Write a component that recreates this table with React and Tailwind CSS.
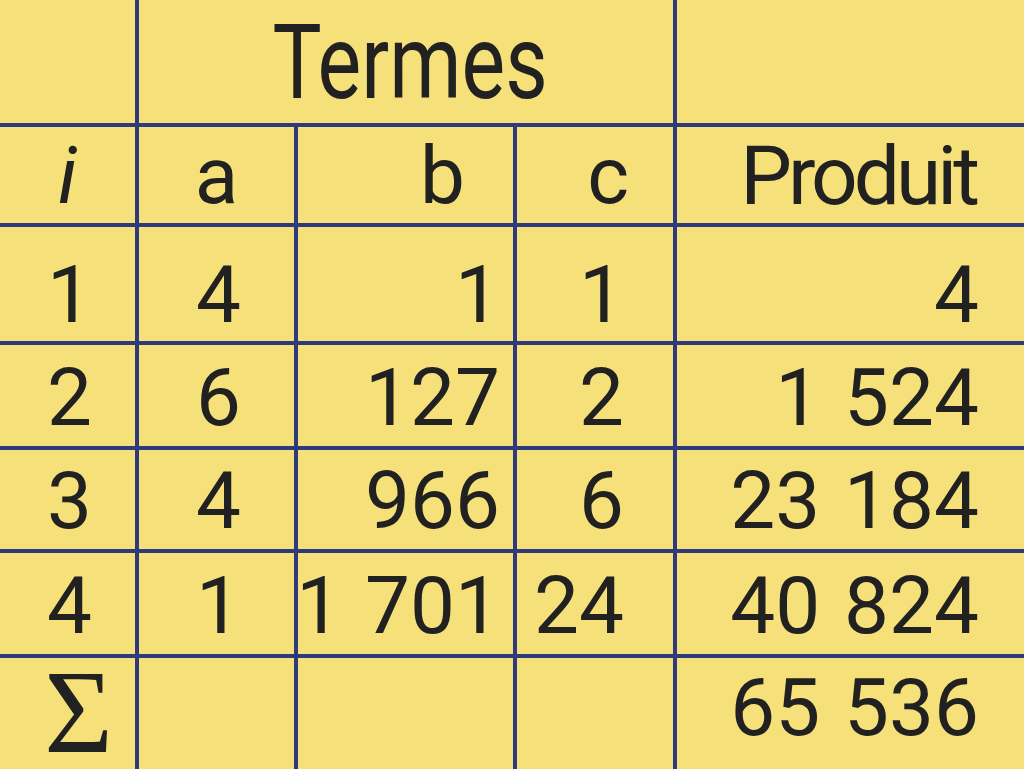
const rows = [
  { pb: "pb-[6px]", cells: ["1", "4", "1", "1", "4"] },
  { pb: "pb-[8px]", cells: ["2", "6", "127", "2", "1 524"] },
  { pb: "pb-[8px]", cells: ["3", "4", "966", "6", "23 184"] },
  { pb: "pb-[8px]", cells: ["4", "1", "1 701", "24", "40 824"] },
]

const cell = "flex items-end bg-[#f6e07a] text-[80px] leading-none"

export default function App() {
  return (
    <div className="grid h-[769px] w-[1024px] grid-cols-[135px_155px_215px_156px_347px] grid-rows-[123px_96px_114px_101px_99px_101px_111px] gap-[4px] overflow-hidden bg-[#2e3a7b] font-[Roboto,sans-serif] text-[#212121] [word-spacing:4px]">
      {/* header: Termes */}
      <div className={cell} />
      <div className="col-span-3 flex items-end justify-center bg-[#f6e07a] pb-[9px] pl-[8px]">
        <span className="inline-block scale-x-80 text-[103px] leading-none">Termes</span>
      </div>
      <div className={cell} />

      {/* header: i a b c Produit */}
      <div className={`${cell} justify-center pb-[7px]`}>
        <span className="italic">i</span>
      </div>
      <div className={`${cell} justify-center pb-[7px]`}>a</div>
      <div className={`${cell} justify-end pb-[7px] pr-[48px]`}>b</div>
      <div className={`${cell} justify-end pb-[7px] pr-[44px]`}>c</div>
      <div className={`${cell} justify-end pb-[6px] pr-[48px] text-[82px] tracking-[-4px]`}>Produit</div>

      {rows.map((r) => (
        <div key={r.cells[0]} className="contents">
          <div className={`${cell} ${r.pb} justify-center pl-[4px]`}>{r.cells[0]}</div>
          <div className={`${cell} ${r.pb} justify-center pl-[4px]`}>{r.cells[1]}</div>
          <div className={`${cell} ${r.pb} justify-end pr-[13px] whitespace-nowrap`}>{r.cells[2]}</div>
          <div className={`${cell} ${r.pb} justify-end pr-[49px]`}>{r.cells[3]}</div>
          <div className={`${cell} ${r.pb} justify-end pr-[45px] whitespace-nowrap`}>{r.cells[4]}</div>
        </div>
      ))}

      {/* sum row */}
      <div className="flex items-end justify-center bg-[#f6e07a] pb-[6px] pl-[22px] font-['Liberation_Serif',serif] text-[118px] leading-[100px]">
        Σ
      </div>
      <div className={cell} />
      <div className={cell} />
      <div className={cell} />
      <div className={`${cell} justify-end pb-[21px] pr-[45px] whitespace-nowrap`}>65 536</div>
    </div>
  )
}
